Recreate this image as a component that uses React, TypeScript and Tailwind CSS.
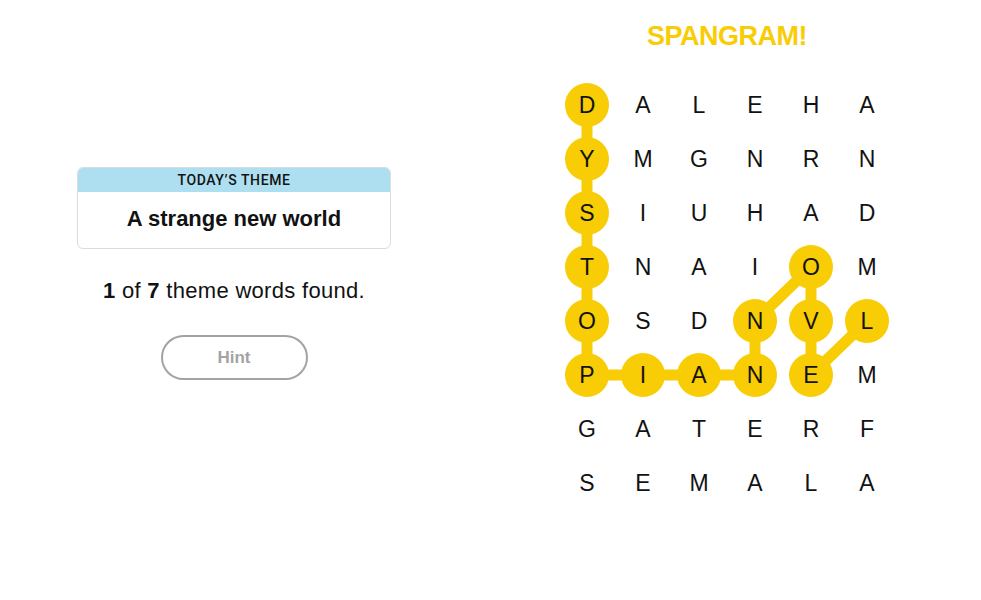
const rows = [
  "DALEHA",
  "YMGNRN",
  "SIUHAD",
  "TNAIOM",
  "OSDNVL",
  "PIANEM",
  "GATERF",
  "SEMALA",
];

// spangram path as [row, col]
const path: [number, number][] = [
  [0, 0], [1, 0], [2, 0], [3, 0], [4, 0], [5, 0],
  [5, 1], [5, 2], [5, 3], [4, 3], [3, 4], [4, 4], [5, 4], [4, 5],
];

const CW = 56;
const CH = 54;
const YELLOW = "#f8cd05";

const picked = new Set(path.map(([r, c]) => `${r}-${c}`));

function Board() {
  return (
    <div className="relative w-[336px]">
      <svg className="absolute left-0 top-0" width={336} height={432}>
        {path.slice(1).map(([r, c], i) => {
          const [pr, pc] = path[i];
          return (
            <line
              key={i}
              x1={pc * CW + CW / 2}
              y1={pr * CH + CH / 2}
              x2={c * CW + CW / 2}
              y2={r * CH + CH / 2}
              stroke={YELLOW}
              strokeWidth={11}
            />
          );
        })}
      </svg>
      <div className="relative grid grid-cols-6">
        {rows.map((row, r) =>
          row.split("").map((ch, c) => (
            <div key={`${r}-${c}`} className="flex h-[54px] w-[56px] items-center justify-center">
              <div
                className={`flex h-[44px] w-[44px] items-center justify-center rounded-full text-[23px] text-[#121212] ${
                  picked.has(`${r}-${c}`) ? "bg-[#f8cd05]" : ""
                }`}
              >
                {ch}
              </div>
            </div>
          ))
        )}
      </div>
    </div>
  );
}

export default function App() {
  return (
    <main className="flex h-[600px] w-[981px] bg-white font-['Liberation_Sans',Arial,sans-serif] text-[#121212]">
      <section className="ml-[77px] flex w-[314px] flex-col items-center pt-[167px]">
        <div className="w-full overflow-hidden rounded-[6px] border border-[#dcdcdc]">
          <div className="flex h-[24px] items-center justify-center bg-[#aedff0] font-['Roboto',sans-serif] text-[14px] font-medium tracking-[0.6px]">
            TODAY’S THEME
          </div>
          <div className="flex h-[56px] items-center justify-center pb-[4px] text-[22px] font-bold">
            A strange new world
          </div>
        </div>
        <p className="mt-[25px] text-[22px] tracking-[0.3px]">
          <b>1</b> of <b>7</b> theme words found.
        </p>
        <button className="mt-[28px] flex h-[45px] w-[147px] items-center justify-center rounded-full border-2 border-[#a3a3a3] text-[17px] font-bold text-[#a3a3a3]">
          Hint
        </button>
      </section>
      <section className="ml-[168px] flex flex-col items-center">
        <h1 className="mt-[16px] h-[44px] text-[27px] font-bold tracking-[-0.5px] text-[#f8cd05]">SPANGRAM!</h1>
        <div className="mt-[18px]">
          <Board />
        </div>
      </section>
    </main>
  );
}
